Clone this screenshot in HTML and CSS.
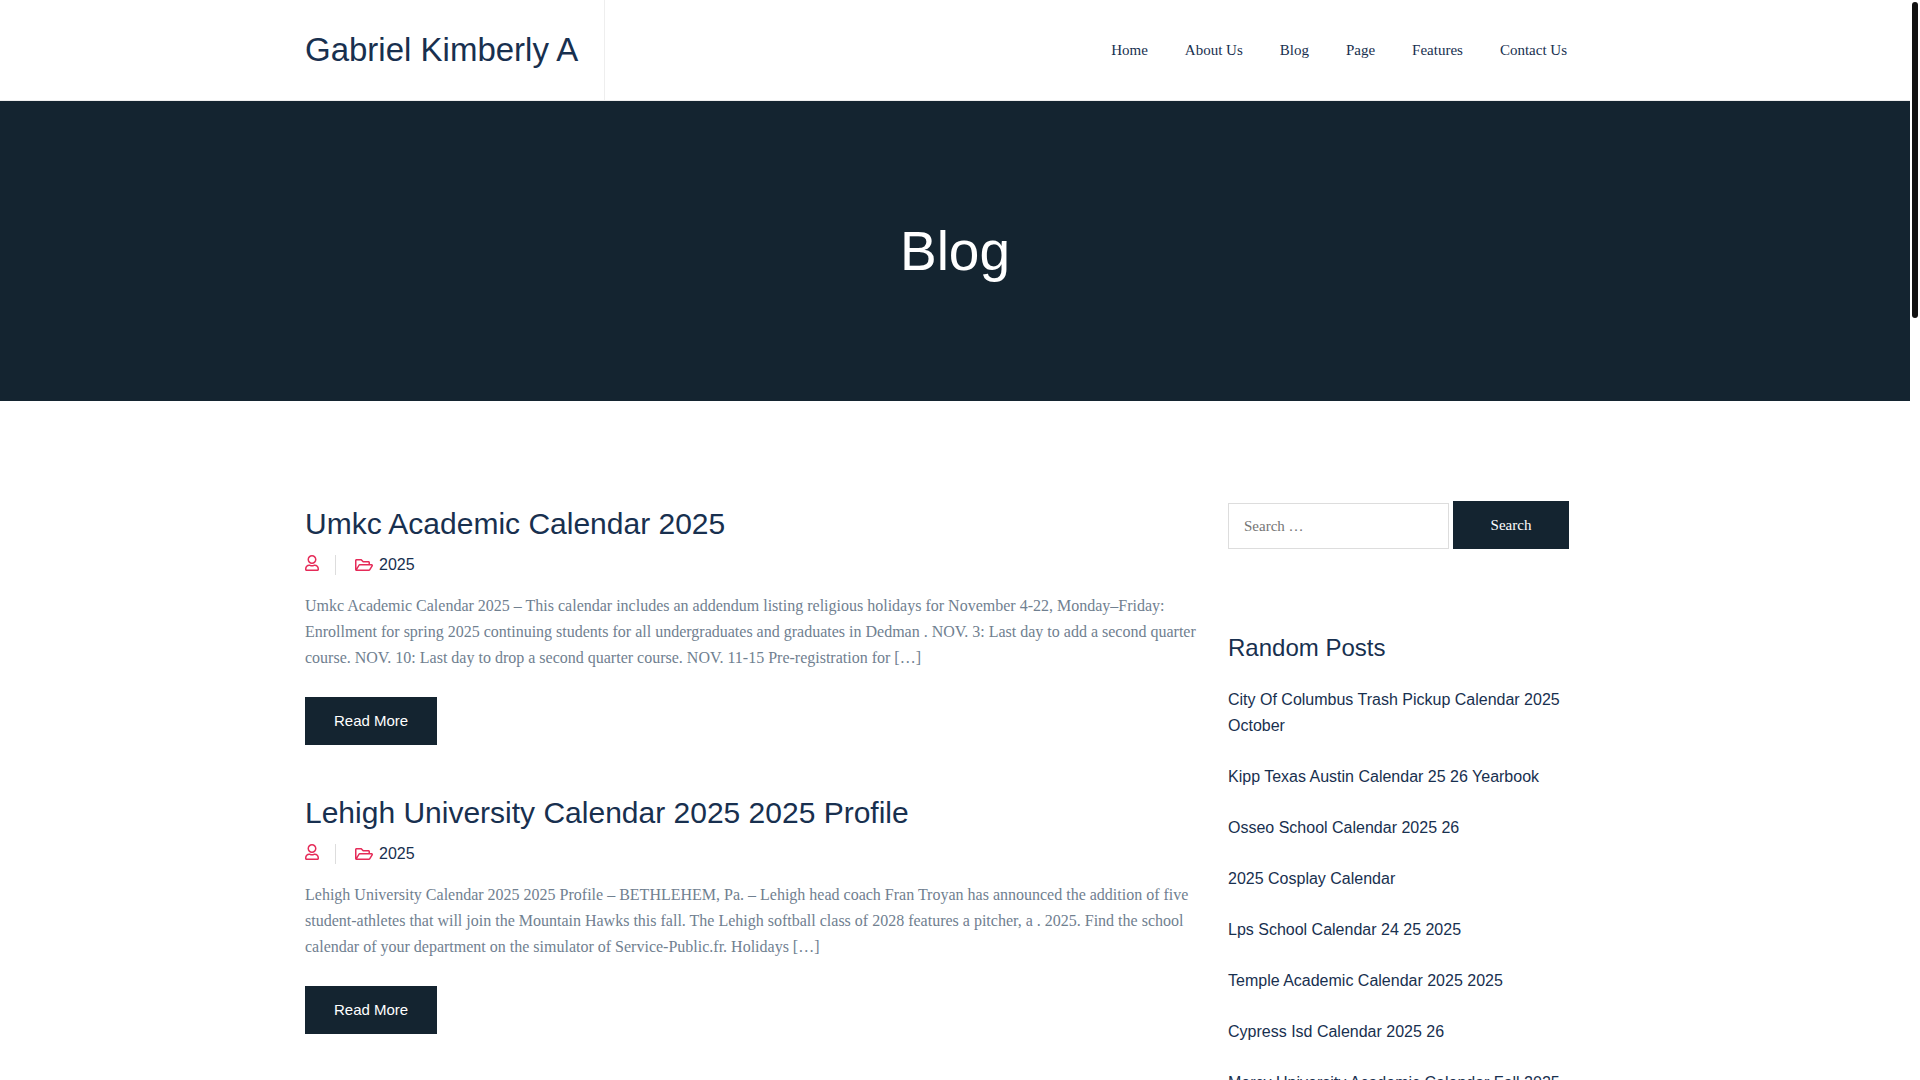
FILE: index.html
```html
<!DOCTYPE html>
<html lang="en">
<head>
    <meta charset="UTF-8">
    <meta name="viewport" content="width=device-width, initial-scale=1">
    <title>Blog - Gabriel Kimberly A</title>
    <link rel="stylesheet" href="styles.css">
</head>
<body>
    <svg class="sprite" aria-hidden="true">
        <symbol id="icon-user" viewBox="0 0 448 512">
            <path d="M313.600 304c-28.700 0-42.500 16-89.600 16-47.100 0-60.800-16-89.600-16C60.200 304 0 364.200 0 438.400V464c0 26.500 21.500 48 48 48h352c26.500 0 48-21.500 48-48v-25.600c0-74.200-60.200-134.400-134.400-134.400zM400 464H48v-25.600c0-47.600 38.800-86.400 86.400-86.400 14.600 0 38.300 16 89.600 16 51.700 0 74.900-16 89.600-16 47.600 0 86.400 38.800 86.400 86.400V464zM224 288c79.500 0 144-64.500 144-144S303.500 0 224 0 80 64.500 80 144s64.500 144 144 144zm0-240c52.900 0 96 43.100 96 96s-43.100 96-96 96-96-43.100-96-96 43.100-96 96-96z"/>
        </symbol>
        <symbol id="icon-folder" viewBox="0 0 576 512">
            <path d="M527.900 224H480v-48c0-26.500-21.500-48-48-48H272l-64-64H48C21.500 64 0 85.500 0 112v288c0 26.500 21.500 48 48 48h400c16.500 0 31.900-8.500 40.700-22.600l79.900-128c20-31.900-3-73.400-40.700-73.400zM48 118c0-3.300 2.700-6 6-6h134.100l64 64H426c3.300 0 6 2.700 6 6v42H152c-16.800 0-32.400 8.800-41.100 23.200L48 351.400V118zm400 282H72l77.200-128H528l-80 128z"/>
        </symbol>
    </svg>

    <header class="site-header">
        <div class="container header-inner">
            <a class="logo" href="#">Gabriel Kimberly A</a>
            <nav class="main-nav">
                <a href="#">Home</a>
                <a href="#">About Us</a>
                <a href="#">Blog</a>
                <a href="#">Page</a>
                <a href="#">Features</a>
                <a href="#">Contact Us</a>
            </nav>
        </div>
    </header>

    <section class="banner">
        <h1>Blog</h1>
    </section>

    <div class="container content">
        <main>
            <article class="post">
                <h2><a href="#">Umkc Academic Calendar 2025</a></h2>
                <div class="meta">
                    <span class="author"><svg class="icon-user"><use href="#icon-user"/></svg></span>
                    <svg class="icon-folder"><use href="#icon-folder"/></svg>
                    <a href="#">2025</a>
                </div>
                <p>Umkc Academic Calendar 2025 – This calendar includes an addendum listing religious holidays for November 4-22, Monday–Friday: Enrollment for spring 2025 continuing students for all undergraduates and graduates in Dedman . NOV. 3: Last day to add a second quarter course. NOV. 10: Last day to drop a second quarter course. NOV. 11-15 Pre-registration for […]</p>
                <a class="read-more" href="#">Read More</a>
            </article>

            <article class="post">
                <h2><a href="#">Lehigh University Calendar 2025 2025 Profile</a></h2>
                <div class="meta">
                    <span class="author"><svg class="icon-user"><use href="#icon-user"/></svg></span>
                    <svg class="icon-folder"><use href="#icon-folder"/></svg>
                    <a href="#">2025</a>
                </div>
                <p>Lehigh University Calendar 2025 2025 Profile – BETHLEHEM, Pa. – Lehigh head coach Fran Troyan has announced the addition of five student-athletes that will join the Mountain Hawks this fall. The Lehigh softball class of 2028 features a pitcher, a . 2025. Find the school calendar of your department on the simulator of Service-Public.fr. Holidays […]</p>
                <a class="read-more" href="#">Read More</a>
            </article>
        </main>

        <aside class="sidebar">
            <form class="search-form">
                <input type="search" placeholder="Search …" aria-label="Search">
                <button type="submit">Search</button>
            </form>
            <h3>Random Posts</h3>
            <ul>
                <li><a href="#">City Of Columbus Trash Pickup Calendar 2025 October</a></li>
                <li><a href="#">Kipp Texas Austin Calendar 25 26 Yearbook</a></li>
                <li><a href="#">Osseo School Calendar 2025 26</a></li>
                <li><a href="#">2025 Cosplay Calendar</a></li>
                <li><a href="#">Lps School Calendar 24 25 2025</a></li>
                <li><a href="#">Temple Academic Calendar 2025 2025</a></li>
                <li><a href="#">Cypress Isd Calendar 2025 26</a></li>
                <li><a href="#">Mercy University Academic Calendar Fall 2025</a></li>
            </ul>
        </aside>
    </div>

    <div class="scroll-thumb"></div>
</body>
</html>
```
FILE: styles.css
```css
* {
    box-sizing: border-box;
}
html {
    scrollbar-width: none;
}
body {
    margin: 0;
    padding-right: 10px;
    background: #fff;
    color: #708090;
    font-family: "Liberation Serif", "Times New Roman", serif;
    font-size: 16px;
    line-height: 26px;
}
a {
    color: #18304f;
    text-decoration: none;
}
h1, h2, h3 {
    margin: 0;
    color: #18304f;
    font-family: "Liberation Sans", Arial, sans-serif;
    font-weight: 400;
}
.sprite {
    display: none;
}
.container {
    max-width: 1300px;
    margin: 0 auto;
    padding-right: 36px;
}

/* header */
.site-header {
    border-bottom: 1px solid #eee;
}
.header-inner {
    display: flex;
    align-items: center;
    justify-content: space-between;
}
.logo {
    padding-right: 26px;
    border-right: 1px solid #eee;
    font-family: "Liberation Sans", Arial, sans-serif;
    font-size: 33px;
    line-height: 100px;
}
.main-nav {
    display: flex;
    gap: 37px;
    padding-right: 2px;
    font-size: 15px;
}

/* banner */
.banner {
    display: flex;
    align-items: center;
    justify-content: center;
    height: 300px;
    background: #142430;
}
.banner h1 {
    color: #fff;
    font-size: 55px;
    line-height: 60px;
}

/* posts */
.content {
    display: grid;
    grid-template-columns: minmax(0, 1fr) 341px;
    gap: 24px;
    padding-top: 100px;
    padding-bottom: 100px;
}
.post {
    margin-bottom: 50px;
}
.post h2 {
    padding-top: 5px;
    font-size: 30px;
    line-height: 36px;
}
.post + .post h2 {
    padding-top: 0;
}
.meta {
    display: flex;
    align-items: center;
    margin: 10px 0 15px;
    font-family: "Liberation Sans", Arial, sans-serif;
}
.author {
    display: flex;
    align-items: flex-start;
    height: 20px;
    margin-right: 19px;
    padding-right: 16px;
    border-right: 1px solid #ddd;
}
.meta svg {
    fill: #e52b58;
}
.icon-user {
    width: 14px;
    height: 16px;
}
.icon-folder {
    width: 18px;
    height: 16px;
    margin-right: 6px;
}
.post p {
    margin: 0 0 26px;
}
.read-more {
    display: inline-block;
    padding: 0 29px;
    background: #142430;
    color: #fff;
    font-family: "Liberation Sans", Arial, sans-serif;
    font-size: 15px;
    line-height: 48px;
    vertical-align: top;
}

/* sidebar */
.search-form {
    display: flex;
    align-items: flex-end;
    gap: 4px;
    margin-bottom: 82px;
}
.search-form input {
    flex: 1;
    min-width: 0;
    height: 46px;
    padding: 0 15px;
    border: 1px solid #ddd;
    background: #fff;
    font-family: inherit;
    font-size: 15px;
    appearance: none;
}
.search-form button {
    width: 116px;
    height: 48px;
    border: 0;
    background: #142430;
    color: #fff;
    font-family: inherit;
    font-size: 15px;
}
.sidebar h3 {
    margin-bottom: 22px;
    font-size: 24px;
    line-height: 34px;
}
.sidebar ul {
    margin: 0;
    padding: 0;
    list-style: none;
    font-family: "Liberation Sans", Arial, sans-serif;
}
.sidebar li {
    margin-bottom: 25px;
}

.scroll-thumb {
    position: fixed;
    top: 2px;
    right: 2px;
    width: 6px;
    height: 316px;
    border-radius: 3px;
    background: #111;
}
```
